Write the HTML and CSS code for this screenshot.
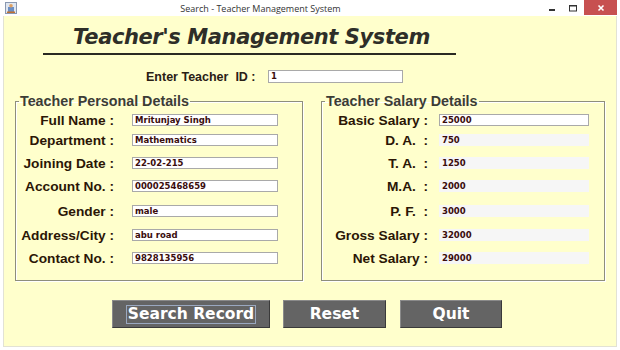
FILE: index.html
```html
<!DOCTYPE html>
<html>
<head>
<meta charset="utf-8">
<link rel="stylesheet" href="styles.css">
</head>
<body>
<div class="window">
  <div class="titlebar">
    <div class="appicon">
      <svg width="12" height="12" viewBox="0 0 12 12"><rect x="0.5" y="0.5" width="11" height="11" fill="#dfe6f0" stroke="#8a98b0"/><rect x="3" y="5" width="6" height="5" fill="#6b8ec4"/><circle cx="6" cy="3.8" r="1.8" fill="#e0a060"/><rect x="2" y="9.5" width="8" height="1.5" fill="#c07030"/></svg>
    </div>
    <div class="wintitle">Search - Teacher Management System</div>
    <div class="controls">
      <span class="ctl min"><svg width="10" height="10" viewBox="0 0 10 10"><rect x="2" y="6" width="6" height="2" fill="#333"/></svg></span>
      <span class="ctl max"><svg width="10" height="10" viewBox="0 0 10 10"><rect x="1.5" y="2.5" width="7" height="5.5" fill="none" stroke="#333"/><rect x="1.5" y="2" width="7" height="1.5" fill="#333"/></svg></span>
      <span class="ctl close"><svg width="10" height="10" viewBox="0 0 10 10"><path d="M2.5 2.5 L7.5 7.5 M7.5 2.5 L2.5 7.5" stroke="#fff" stroke-width="1.6"/></svg></span>
    </div>
  </div>
  <div class="content">
    <div class="heading">
      <h1 class="apptitle">Teacher's Management System</h1>
      <div class="rule"></div>
    </div>
    <div class="idrow">
      <span class="idlabel">Enter Teacher&nbsp; ID :</span>
      <span class="field idfield">1</span>
    </div>
    <div class="panels">
      <fieldset class="panel left">
        <legend>Teacher Personal Details</legend>
        <div class="rows">
          <div class="row r1"><span class="lbl">Full Name :</span><span class="field">Mritunjay Singh</span></div>
          <div class="row r2"><span class="lbl">Department :</span><span class="field">Mathematics</span></div>
          <div class="row r3"><span class="lbl">Joining Date :</span><span class="field">22-02-215</span></div>
          <div class="row r4"><span class="lbl">Account No. :</span><span class="field">000025468659</span></div>
          <div class="row r5"><span class="lbl">Gender :</span><span class="field">male</span></div>
          <div class="row r6"><span class="lbl">Address/City :</span><span class="field">abu road</span></div>
          <div class="row r7"><span class="lbl">Contact No. :</span><span class="field">9828135956</span></div>
        </div>
      </fieldset>
      <fieldset class="panel right">
        <legend>Teacher Salary Details</legend>
        <div class="rows">
          <div class="row r1"><span class="lbl">Basic Salary :</span><span class="field">25000</span></div>
          <div class="row r2"><span class="lbl">D. A. &nbsp;:</span><span class="field ro">750</span></div>
          <div class="row r3"><span class="lbl">T. A. &nbsp;:</span><span class="field ro">1250</span></div>
          <div class="row r4"><span class="lbl">M.A. &nbsp;:</span><span class="field ro">2000</span></div>
          <div class="row r5"><span class="lbl">P. F. &nbsp;:</span><span class="field ro">3000</span></div>
          <div class="row r6"><span class="lbl">Gross Salary :</span><span class="field ro">32000</span></div>
          <div class="row r7"><span class="lbl">Net Salary :</span><span class="field ro">29000</span></div>
        </div>
      </fieldset>
    </div>
    <div class="buttons">
      <button class="btn search"><span class="focus">Search Record</span></button>
      <button class="btn reset">Reset</button>
      <button class="btn quit">Quit</button>
    </div>
  </div>
</div>
</body>
</html>
```
FILE: styles.css
```css
html, body {
  margin: 0;
  padding: 0;
  background: #ffffff;
}
.window {
  width: 620px;
  height: 350px;
  background: #ffffff;
  display: flex;
  flex-direction: column;
}
.titlebar {
  height: 16px;
  display: flex;
  align-items: center;
}
.appicon {
  width: 12px;
  height: 12px;
  margin-left: 5px;
  display: flex;
}
.wintitle {
  flex: 1;
  text-align: center;
  font-family: "Open Sans", "DejaVu Sans", sans-serif;
  font-size: 9px;
  color: #333;
  padding-right: 38px;
}
.controls {
  display: flex;
  align-items: flex-start;
  height: 16px;
  margin-right: 3px;
}
.ctl {
  display: flex;
  align-items: center;
  justify-content: center;
  height: 15px;
}
.min { width: 20px; }
.max { width: 22px; }
.close {
  width: 33px;
  background: #c75050;
}
.content {
  flex: 1;
  margin: 0 3px 3px 3px;
  background: #ffffcc;
  border: 1px solid #e2e2d4;
  border-top: none;
  display: flex;
  flex-direction: column;
}
.heading {
  width: 413px;
  margin-left: 39px;
  padding-top: 7px;
}
.apptitle {
  margin: 0;
  padding-left: 4px;
  text-align: center;
  font-family: "DejaVu Sans", sans-serif;
  font-weight: bold;
  font-style: italic;
  font-size: 21px;
  letter-spacing: -0.4px;
  color: #2e2e28;
  line-height: 28px;
}
.rule {
  height: 2px;
  background: #2a2a22;
  margin-top: 2px;
}
.idrow {
  display: flex;
  align-items: center;
  margin-top: 15px;
  margin-left: 142px;
  height: 13px;
}
.idlabel {
  font-family: "Liberation Sans", Arial, sans-serif;
  font-weight: bold;
  font-size: 12.5px;
  color: #2a2015;
  width: 122px;
}
.field {
  box-sizing: border-box;
  height: 12px;
  width: 146px;
  background: #ffffff;
  border: 1px solid #a9a9a9;
  font-family: "DejaVu Sans", sans-serif;
  font-weight: bold;
  font-size: 8.5px;
  line-height: 10px;
  color: #3a0c0c;
  padding-left: 2px;
  white-space: nowrap;
}
.idfield {
  width: 135px;
  height: 13px;
}
.field.ro {
  background: #f6f6f6;
  border-color: #f6f6f6;
}
.panels {
  display: flex;
  margin-top: 11px;
  margin-left: 11px;
  gap: 18px;
}
.panel {
  margin: 0;
  padding: 0;
  border: 1px solid #8e8e7c;
  box-shadow: 1px 1px 0 #ffffff inset, 1px 1px 0 #ffffff;
  height: 187px;
  box-sizing: border-box;
}
.panel.left { width: 288px; }
.panel.right { width: 284px; }
.panel legend {
  font-family: "Liberation Sans", Arial, sans-serif;
  font-weight: bold;
  font-size: 14.3px;
  color: #3c3c36;
  padding: 0 1px;
  margin-left: 3px;
  line-height: 14px;
}
.rows {
  display: flex;
  flex-direction: column;
  padding-top: 6px;
}
.row {
  display: flex;
  align-items: center;
  height: 12px;
}
.row.r2 { margin-top: 8px; }
.row.r3 { margin-top: 11px; }
.row.r4 { margin-top: 11px; }
.row.r5 { margin-top: 13px; }
.row.r6 { margin-top: 12px; }
.row.r7 { margin-top: 11px; }
.lbl {
  font-family: "Liberation Sans", Arial, sans-serif;
  font-weight: bold;
  font-size: 13.7px;
  color: #2b1606;
  text-align: right;
  white-space: nowrap;
}
.left .lbl { width: 98px; margin-right: 18px; }
.right .lbl { width: 106px; margin-right: 11px; }
.right .field { width: 150px; }
.buttons {
  display: flex;
  margin-top: 19px;
  margin-left: 108px;
}
.btn {
  height: 28px;
  background: #646464;
  border: 1px solid #3a3a3a;
  border-top-color: #8a8a8a;
  border-left-color: #8a8a8a;
  color: #ffffff;
  font-family: "DejaVu Sans", sans-serif;
  font-weight: bold;
  font-size: 15.5px;
  padding: 0;
  display: flex;
  align-items: center;
  justify-content: center;
}
.btn.search { width: 158px; }
.btn.reset { width: 103px; margin-left: 13px; }
.btn.quit { width: 102px; margin-left: 14px; }
.focus {
  border: 1px solid #9aa8c0;
  padding: 0 1px;
  line-height: 17px;
}
```
